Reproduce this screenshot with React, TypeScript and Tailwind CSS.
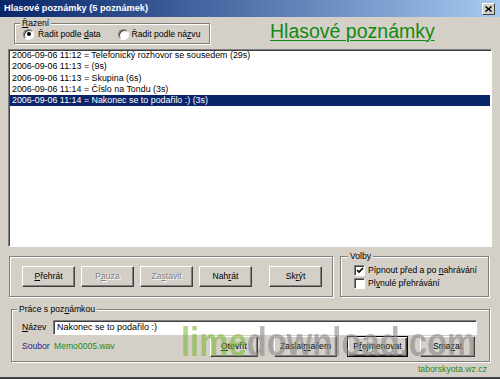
import { ReactNode } from "react";

const FONT = "font-['Liberation_Sans',Arial,sans-serif]";

type BtnProps = {
  children: ReactNode;
  width: string;
  disabled?: boolean;
  isDefault?: boolean;
  className?: string;
};

function Btn({ children, width, disabled, isDefault, className = "" }: BtnProps) {
  return (
    <button
      type="button"
      className={`${width} ${className} flex h-[21px] shrink-0 items-center justify-center whitespace-nowrap border bg-[#d4d0c8] text-[8.6px] ${
        isDefault
          ? "border-black shadow-[inset_1px_1px_0_#fff,inset_-1px_-1px_0_#404040,inset_-2px_-2px_0_#808080]"
          : "border-t-white border-l-white border-r-[#404040] border-b-[#404040] shadow-[inset_-1px_-1px_0_#808080]"
      } ${disabled ? "text-[#808080] [text-shadow:1px_1px_0_#fff]" : "text-black"}`}
    >
      {children}
    </button>
  );
}

function Radio({ checked }: { checked?: boolean }) {
  return (
    <span className="flex h-[11px] w-[11px] shrink-0 items-center justify-center rounded-full border border-t-[#808080] border-l-[#808080] border-r-white border-b-white bg-white shadow-[inset_1px_1px_0_#404040]">
      {checked && <span className="h-[4px] w-[4px] rounded-full bg-black" />}
    </span>
  );
}

function Check({ checked }: { checked?: boolean }) {
  return (
    <span className="flex h-[11px] w-[11px] shrink-0 items-center justify-center border border-t-[#808080] border-l-[#808080] border-r-white border-b-white bg-white shadow-[inset_1px_1px_0_#404040]">
      {checked && (
        <svg width="8" height="7" viewBox="0 0 8 7">
          <path d="M1 3 L3 5 L7 1" stroke="black" strokeWidth="1.6" fill="none" />
        </svg>
      )}
    </span>
  );
}

const notes = [
  "2006-09-06 11:12 = Telefonický rozhovor se sousedem (29s)",
  "2006-09-06 11:13 =  (9s)",
  "2006-09-06 11:13 = Skupina (6s)",
  "2006-09-06 11:14 = Číslo na Tondu (3s)",
  "2006-09-06 11:14 = Nakonec se to podařilo :) (3s)",
];

const etched = "border border-[#808080] shadow-[inset_1px_1px_0_#fff,1px_1px_0_#fff]";

export default function App() {
  return (
    <div className={`${FONT} relative flex h-[379px] w-[500px] flex-col overflow-hidden whitespace-nowrap border-b-2 border-b-[#404040] bg-[#d4d0c8] text-[8.6px] text-black`}>
      {/* title bar */}
      <div className="flex h-[17px] shrink-0 items-center justify-between bg-gradient-to-r from-[#0a246a] to-[#a6caf0] pl-1 pr-[5px]">
        <span className="text-[9.2px] font-bold text-white">Hlasové poznámky (5 poznámek)</span>
        <span className="flex h-[12px] w-[13px] items-center justify-center border border-t-white border-l-white border-r-[#404040] border-b-[#404040] bg-[#d4d0c8]">
          <svg width="7" height="6" viewBox="0 0 7 6">
            <path d="M0.5 0.5 L6.5 5.5 M6.5 0.5 L0.5 5.5" stroke="black" strokeWidth="1.5" />
          </svg>
        </span>
      </div>

      {/* sort + heading */}
      <div className="flex shrink-0 items-start">
        <fieldset className={`ml-[14px] mt-px h-[26px] w-[196px] ${etched}`}>
          <legend className="ml-[5px] bg-[#d4d0c8] px-[2px] leading-[11px]">
            <span className="underline">Ř</span>azení
          </legend>
          <div className="flex h-[10px] items-center pl-[8px]">
            <Radio checked />
            <span className="ml-[4px]">
              Řadit podle <span className="underline">d</span>ata
            </span>
            <span className="ml-[17px]">
              <Radio />
            </span>
            <span className="ml-[3px]">
              Řadit podle ná<span className="underline">z</span>vu
            </span>
          </div>
        </fieldset>
        <div className="ml-[60px] mt-[2px] text-[19.5px] leading-[24px] text-[#128a12] underline decoration-1 underline-offset-2">
          Hlasové poznámky
        </div>
      </div>

      {/* list */}
      <div className="mx-[8px] mt-[5px] h-[198px] shrink-0 border border-t-[#808080] border-l-[#808080] border-r-white border-b-white bg-white px-px text-[8.9px] shadow-[inset_1px_1px_0_#404040]">
        {notes.map((note, i) => (
          <div
            key={i}
            className={`h-[11.3px] pl-[2px] leading-[11.3px] ${i === notes.length - 1 ? "bg-[#0a246a] text-white" : ""}`}
          >
            {note}
          </div>
        ))}
      </div>

      {/* controls */}
      <div className="mt-[3px] flex shrink-0 items-start">
        <div className={`ml-[9px] mt-[6px] flex h-[41px] w-[324px] items-center pl-[12px] ${etched}`}>
          <Btn width="w-[53px]">
            <span className="underline">P</span>řehrát
          </Btn>
          <Btn width="w-[53px]" disabled className="ml-[6px]">
            P<span className="underline">a</span>uza
          </Btn>
          <Btn width="w-[53px]" disabled className="ml-[6px]">
            Za<span className="underline">s</span>tavit
          </Btn>
          <Btn width="w-[53px]" className="ml-[6px]">
            Nah<span className="underline">r</span>át
          </Btn>
          <Btn width="w-[53px]" className="ml-[17px]">
            Sk<span className="underline">r</span>ýt
          </Btn>
        </div>
        <fieldset className={`ml-[7px] h-[47px] w-[149px] ${etched}`}>
          <legend className="ml-[7px] bg-[#d4d0c8] px-[2px] leading-[12px]">Volby</legend>
          <div className="flex flex-col pl-[13px] pt-[2px]">
            <div className="flex h-[13px] items-center">
              <Check checked />
              <span className="ml-[3px]">
                Pípnout před a po <span className="underline">n</span>ahrávání
              </span>
            </div>
            <div className="flex h-[13px] items-center">
              <Check />
              <span className="ml-[3px]">
                Pl<span className="underline">y</span>nulé přehrávání
              </span>
            </div>
          </div>
        </fieldset>
      </div>

      {/* note work */}
      <fieldset className={`ml-[11px] mt-[6px] h-[59px] w-[479px] shrink-0 ${etched}`}>
        <legend className="ml-[5px] bg-[#d4d0c8] px-[2px] leading-[12px]">
          Práce s poz<span className="underline">n</span>ámkou
        </legend>
        <div className="flex items-center pl-[10px] pt-[5px]">
          <span className="w-[31px]">
            <span className="underline">N</span>ázev
          </span>
          <div className="h-[15px] w-[424px] border border-t-[#808080] border-l-[#808080] border-r-white border-b-white bg-white pl-[3px] text-[9px] leading-[13px] shadow-[inset_1px_1px_0_#404040]">
            Nakonec se to podařilo :)
          </div>
        </div>
        <div className="mt-px flex items-center pl-[10px]">
          <span className="w-[32px] text-[#24248a]">Soubor</span>
          <span className="w-[62px] text-[#1e8a1e]">Memo0005.wav</span>
          <Btn width="w-[48px]" className="ml-[94px]">
            <span className="underline">O</span>tevřít
          </Btn>
          <Btn width="w-[63px]" className="ml-[16px]">
            Zaslat <span className="underline">m</span>ailem
          </Btn>
          <Btn width="w-[61px]" isDefault className="ml-[10px]">
            P<span className="underline">ř</span>ejmenovat
          </Btn>
          <Btn width="w-[55px]" className="ml-[12px]">
            Sma<span className="underline">z</span>at
          </Btn>
        </div>
      </fieldset>

      <div className="flex justify-end pr-[13px] pt-[2px] text-[8.7px] leading-[10px] text-[#1e8a1e]">taborskyota.wz.cz</div>

      {/* watermark */}
      <div className="pointer-events-none absolute left-[181px] top-[318px] origin-left scale-x-[0.8] text-[41px] font-bold leading-[48px] opacity-60">
        <span className="text-[#7cb83a]">lime</span>
        <span className="text-[#8a8a8a]">download.com</span>
      </div>
    </div>
  );
}
